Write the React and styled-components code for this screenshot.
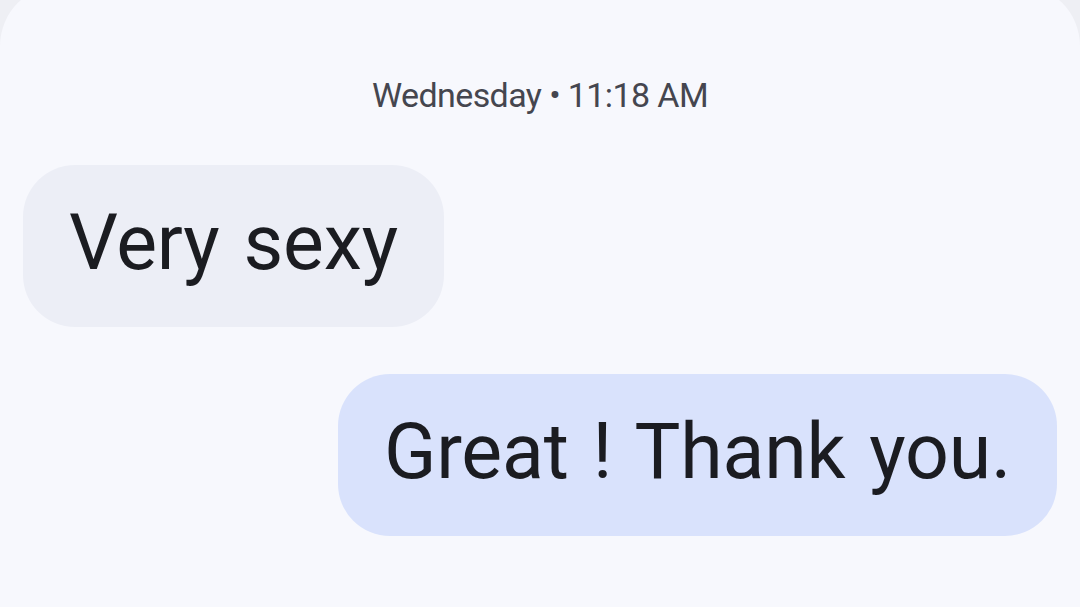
import React from "react";
import styled, { createGlobalStyle } from "styled-components";

const Global = createGlobalStyle`
  html, body { margin: 0; padding: 0; background: #eeeff4; overflow: hidden; }
  body { font-family: Roboto, "Noto Sans", sans-serif; }
`;

const Screen = styled.div`
  width: 1080px;
  height: 607px;
  overflow: hidden;
  background: #eeeff4;
`;

const Panel = styled.div`
  margin-top: -15px;
  height: 700px;
  background: #f7f8fd;
  border-radius: 61px 61px 0 0;
  padding: 90px 23px 0;
  display: flex;
  flex-direction: column;
`;

const Stamp = styled.div`
  text-align: center;
  font-size: 34px;
  line-height: 40px;
  color: #45464f;
  letter-spacing: -0.6px;
  margin-bottom: 50px;
`;

const Row = styled.div`
  display: flex;
  justify-content: ${(p) => (p.$out ? "flex-end" : "flex-start")};
  margin-bottom: 47px;
`;

const Bubble = styled.div`
  height: 162px;
  box-sizing: border-box;
  padding: 0 46px 6px;
  display: flex;
  align-items: center;
  border-radius: 52px;
  background: ${(p) => (p.$out ? "#d9e2fc" : "#eceef6")};
  color: #1b1c21;
  font-size: 77px;
  letter-spacing: -0.2px;
  word-spacing: 5px;
`;

export default function App() {
  return (
    <Screen>
      <Global />
      <Panel>
        <Stamp>Wednesday • 11:18 AM</Stamp>
        <Row>
          <Bubble>Very sexy</Bubble>
        </Row>
        <Row $out>
          <Bubble $out>Great ! Thank you.</Bubble>
        </Row>
      </Panel>
    </Screen>
  );
}
